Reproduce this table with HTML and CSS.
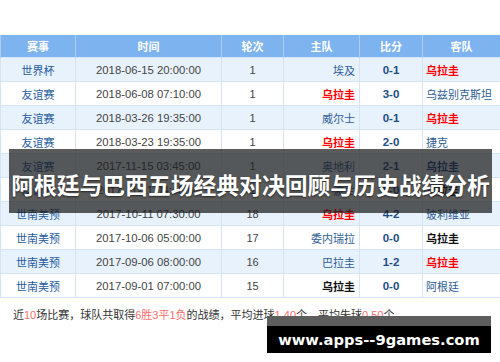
FILE: index.html
```html
<!DOCTYPE html>
<html>
<head>
    <meta charset="UTF-8">
    <title>阿根廷与巴西五场经典对决回顾与历史战绩分析</title>
    <link rel="stylesheet" href="styles.css">
</head>
<body>
    <div class="page">
        <table class="match-table">
            <colgroup>
                <col class="col-event">
                <col class="col-time">
                <col class="col-round">
                <col class="col-home">
                <col class="col-score">
                <col class="col-away">
            </colgroup>
            <thead>
                <tr><th>赛事</th><th>时间</th><th>轮次</th><th>主队</th><th>比分</th><th>客队</th></tr>
            </thead>
            <tbody>
                <tr><td class="event">世界杯</td><td class="time">2018-06-15 20:00:00</td><td class="round">1</td><td class="home">埃及</td><td class="score">0-1</td><td class="away"><span class="team-red">乌拉圭</span></td></tr>
                <tr><td class="event">友谊赛</td><td class="time">2018-06-08 07:10:00</td><td class="round">1</td><td class="home"><span class="team-red">乌拉圭</span></td><td class="score">3-0</td><td class="away">乌兹别克斯坦</td></tr>
                <tr><td class="event">友谊赛</td><td class="time">2018-03-26 19:35:00</td><td class="round">1</td><td class="home">威尔士</td><td class="score">0-1</td><td class="away"><span class="team-red">乌拉圭</span></td></tr>
                <tr><td class="event">友谊赛</td><td class="time">2018-03-23 19:35:00</td><td class="round">1</td><td class="home"><span class="team-red">乌拉圭</span></td><td class="score">2-0</td><td class="away">捷克</td></tr>
                <tr><td class="event">友谊赛</td><td class="time">2017-11-15 03:45:00</td><td class="round">1</td><td class="home">奥地利</td><td class="score">2-1</td><td class="away"><span class="team-blue">乌拉圭</span></td></tr>
                <tr><td class="event">友谊赛</td><td class="time">2017-11-11 04:45:00</td><td class="round">1</td><td class="home">波兰</td><td class="score">0-0</td><td class="away"><span class="team-black">乌拉圭</span></td></tr>
                <tr><td class="event">世南美预</td><td class="time">2017-10-11 07:30:00</td><td class="round">18</td><td class="home"><span class="team-red">乌拉圭</span></td><td class="score">4-2</td><td class="away">玻利维亚</td></tr>
                <tr><td class="event">世南美预</td><td class="time">2017-10-06 05:00:00</td><td class="round">17</td><td class="home">委内瑞拉</td><td class="score">0-0</td><td class="away"><span class="team-black">乌拉圭</span></td></tr>
                <tr><td class="event">世南美预</td><td class="time">2017-09-06 08:00:00</td><td class="round">16</td><td class="home">巴拉圭</td><td class="score">1-2</td><td class="away"><span class="team-red">乌拉圭</span></td></tr>
                <tr><td class="event">世南美预</td><td class="time">2017-09-01 07:00:00</td><td class="round">15</td><td class="home"><span class="team-black">乌拉圭</span></td><td class="score">0-0</td><td class="away">阿根廷</td></tr>
            </tbody>
        </table>
        <p class="summary">近<em>10</em>场比赛，球队共取得<em>6胜3平1负</em>的战绩，平均进球<em>1.40</em>个，平均失球<em>0.50</em>个</p>

        <div class="title-band">
            <h1>阿根廷与巴西五场经典对决回顾与历史战绩分析</h1>
        </div>
        <div class="watermark">www.apps--9games.com</div>
    </div>
</body>
</html>
```

FILE: styles.css
```css
body {
    margin: 0;
    background: #fff;
    font-family: "Liberation Sans", "Noto Sans CJK SC", sans-serif;
    font-size: 11px;
    color: #333;
}

.page {
    position: relative;
    width: 500px;
    height: 362px;
    padding-top: 35px;
    box-sizing: border-box;
    overflow: hidden;
}

.match-table {
    width: 500px;
    border-collapse: collapse;
    table-layout: fixed;
}
.col-event { width: 75px; }
.col-time { width: 146px; }
.col-round { width: 62px; }
.col-home { width: 76px; }
.col-score { width: 63px; }
.col-away { width: 78px; }

.match-table th {
    height: 22px;
    padding: 0;
    background: #7db3ef;
    color: #fff;
    font-weight: bold;
    font-size: 11px;
    border-left: 1px solid #a9cdf4;
    border-right: 1px solid #a9cdf4;
}
.match-table td {
    height: 23px;
    padding: 0;
    text-align: center;
    border: 1px solid #d3e4f8;
    white-space: nowrap;
}
.match-table tbody tr:nth-child(odd) td {
    background: #e8f2fd;
}

.event { color: #1f5c9f; }
.time { color: #444; font-size: 11.3px; }
.round { color: #444; }
.home {
    text-align: right !important;
    padding-right: 4px !important;
    color: #2f5d94;
}
.away {
    text-align: left !important;
    padding-left: 3px !important;
    color: #2f5d94;
}
.score {
    color: #1d4c86;
    font-weight: bold;
    font-size: 11.5px;
}

.team-red { color: #f00; font-weight: bold; }
.team-blue { color: #1c3f8c; font-weight: bold; }
.team-black { color: #111; font-weight: bold; }

.summary {
    margin: 10px 0 0 13px;
    line-height: 14px;
    color: #333;
}
.summary em {
    font-style: normal;
    color: #ff6b6b;
}

.title-band {
    position: absolute;
    left: 9px;
    top: 149px;
    width: 483px;
    height: 64px;
    background: rgba(28, 28, 28, 0.72);
    display: flex;
    align-items: center;
    justify-content: center;
}
.title-band h1 {
    margin: 6px 0 0;
    font-family: "Noto Sans CJK SC", sans-serif;
    font-size: 22.8px;
    font-weight: bold;
    color: #fff;
    white-space: nowrap;
    text-shadow: 0 1px 2px rgba(0, 0, 0, 0.6);
}

.watermark {
    position: absolute;
    left: 267px;
    top: 316px;
    width: 224px;
    height: 37px;
    box-sizing: border-box;
    padding-top: 10px;
    background: linear-gradient(#5d5d5d 0, #5d5d5d 10px, #000 10px);
    color: #fff;
    font-family: "DejaVu Sans", sans-serif;
    font-weight: bold;
    font-size: 14.7px;
    line-height: 27px;
    text-align: center;
}
```
